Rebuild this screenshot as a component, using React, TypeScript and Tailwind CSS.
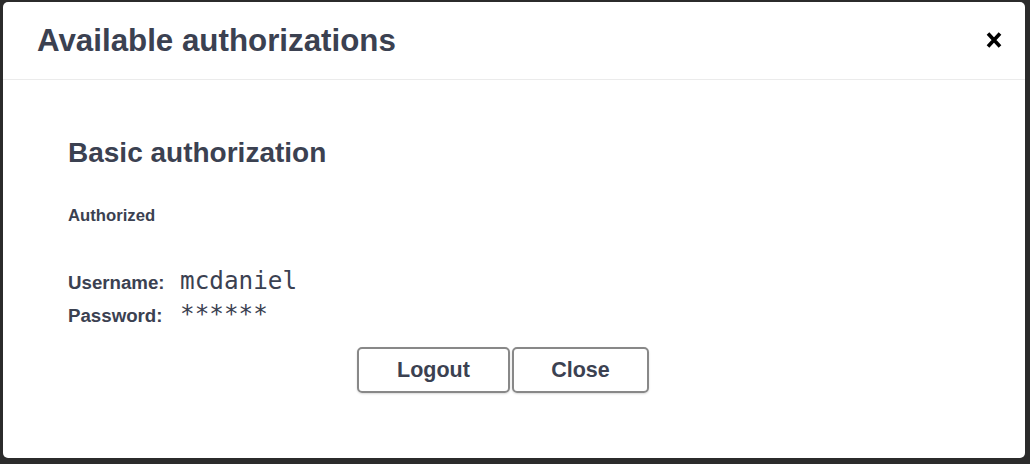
const textColor = "text-[#3b4151]";

function CloseIcon() {
  return (
    <svg width="18" height="18" viewBox="0 0 18 18" aria-hidden="true">
      <path
        d="M3 2.5 L15 15.5 M15 2.5 L3 15.5"
        stroke="#000"
        strokeWidth="3.6"
        strokeLinecap="butt"
      />
    </svg>
  );
}

export default function App() {
  return (
    <div className="h-[464px] w-[1030px] overflow-hidden bg-[#2b2b2b] pl-[3px] pt-[2px] font-['Liberation_Sans',Arial,sans-serif]">
      <div className="flex h-[456px] w-[1022px] flex-col rounded-[5px] bg-white">
        <div className="flex h-[78px] shrink-0 items-center justify-between border-b border-[#ebebeb] pl-[34px] pr-[21px]">
          <h3 className={`text-[31.3px] font-bold leading-none ${textColor}`}>
            Available authorizations
          </h3>
          <button className="mt-[-1px] flex h-[20px] w-[20px] items-center justify-center">
            <CloseIcon />
          </button>
        </div>
        <div className={`flex flex-col pl-[65px] pt-[59px] ${textColor}`}>
          <h4 className="text-[28px] font-bold leading-none">Basic authorization</h4>
          <h6 className="mt-[41px] text-[16.7px] font-bold leading-none">Authorized</h6>
          <div className="mt-[44px] flex flex-col">
            <div className="flex h-[33px] items-baseline">
              <span className="w-[112px] text-[18.7px] font-bold leading-none">Username:</span>
              <code className="font-['DejaVu_Sans_Mono',monospace] text-[24.3px] leading-none">mcdaniel</code>
            </div>
            <div className="flex h-[33px] items-baseline">
              <span className="w-[112px] text-[18.7px] font-bold leading-none">Password:</span>
              <code className="font-['DejaVu_Sans_Mono',monospace] text-[24.3px] leading-none">******</code>
            </div>
          </div>
          <div className="ml-[289px] mt-[12px] flex gap-[2px]">
            <button className="h-[46px] w-[153px] rounded-[5px] border-2 border-[#888888] text-[21.5px] font-bold shadow-[0_1px_2px_rgba(0,0,0,0.15)]">
              Logout
            </button>
            <button className="h-[46px] w-[137px] rounded-[5px] border-2 border-[#888888] text-[21.5px] font-bold shadow-[0_1px_2px_rgba(0,0,0,0.15)]">
              Close
            </button>
          </div>
        </div>
      </div>
    </div>
  );
}
